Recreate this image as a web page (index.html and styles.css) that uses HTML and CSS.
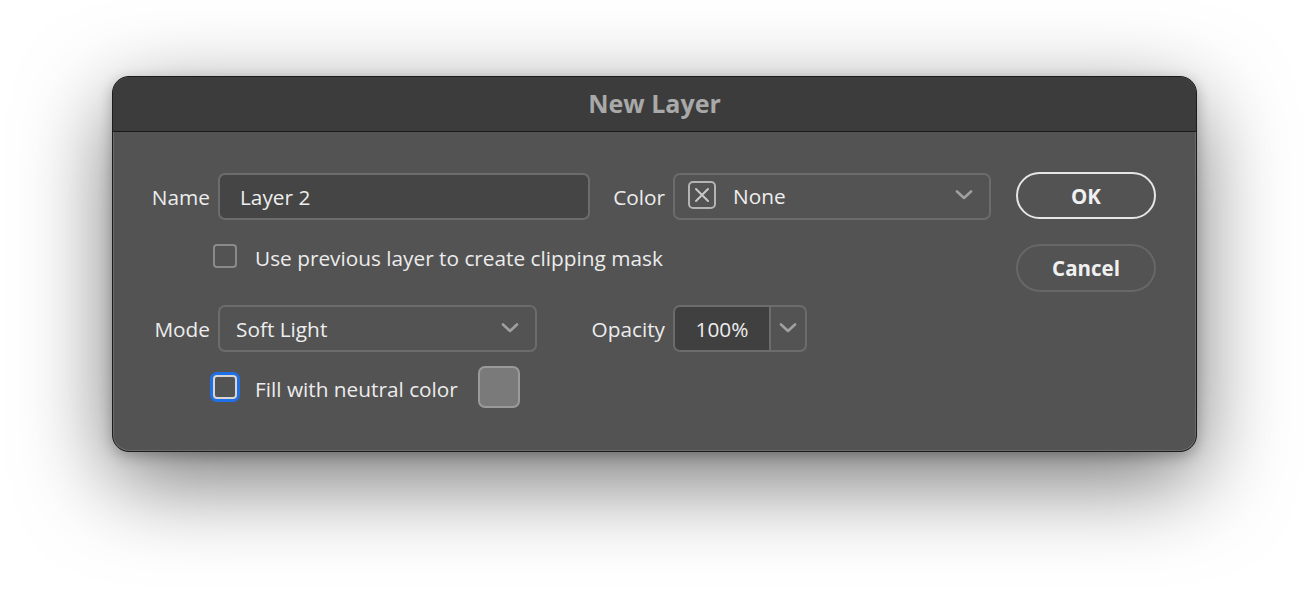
FILE: index.html
```html
<!DOCTYPE html>
<html>
<head>
<meta charset="utf-8">
<link rel="stylesheet" href="styles.css">
</head>
<body>
<div class="dialog">
  <div class="titlebar">New Layer</div>
  <div class="content">
    <div class="form">
      <div class="row row-fields">
        <label class="lbl">Name</label>
        <div class="field name-field">Layer 2</div>
        <label class="lbl">Color</label>
        <div class="field select color-select">
          <svg class="xbox" width="28" height="28" viewBox="0 0 28 28"><rect x="1" y="1" width="26" height="26" rx="4" fill="none" stroke="#b4b4b4" stroke-width="2"/><path d="M8 8 L20 20 M20 8 L8 20" stroke="#c8c8c8" stroke-width="2" stroke-linecap="round"/></svg>
          <span class="sel-text">None</span>
          <svg class="chev" width="18" height="10" viewBox="0 0 18 10"><path d="M2 1.5 L9 8 L16 1.5" fill="none" stroke="#a0a0a0" stroke-width="2.6" stroke-linecap="round" stroke-linejoin="round"/></svg>
        </div>
      </div>
      <div class="row row-check first-check">
        <span class="checkbox"></span>
        <span class="check-text">Use previous layer to create clipping mask</span>
      </div>
      <div class="row row-fields mode-row">
        <label class="lbl">Mode</label>
        <div class="field select mode-select">
          <span class="sel-text">Soft Light</span>
          <svg class="chev" width="18" height="10" viewBox="0 0 18 10"><path d="M2 1.5 L9 8 L16 1.5" fill="none" stroke="#a0a0a0" stroke-width="2.6" stroke-linecap="round" stroke-linejoin="round"/></svg>
        </div>
        <label class="lbl">Opacity</label>
        <div class="opacity">
          <div class="op-value">100%</div>
          <div class="op-btn"><svg width="18" height="10" viewBox="0 0 18 10"><path d="M2 1.5 L9 8 L16 1.5" fill="none" stroke="#a0a0a0" stroke-width="2.6" stroke-linecap="round" stroke-linejoin="round"/></svg></div>
        </div>
      </div>
      <div class="row row-check fill-row">
        <span class="checkbox focused"></span>
        <span class="check-text">Fill with neutral color</span>
        <span class="swatch"></span>
      </div>
    </div>
    <div class="buttons">
      <button class="btn btn-ok">OK</button>
      <button class="btn btn-cancel">Cancel</button>
    </div>
  </div>
</div>
</body>
</html>
```
FILE: styles.css
```css
html, body {
  margin: 0;
  padding: 0;
  background: #ffffff;
}
body {
  width: 1308px;
  height: 600px;
  overflow: hidden;
  padding: 76px 0 0 112px;
  box-sizing: border-box;
  font-family: "Open Sans", "Lato", sans-serif;
}
.dialog {
  width: 1085px;
  height: 376px;
  box-sizing: border-box;
  background: #535353;
  border: 1px solid #1c1c1c;
  border-radius: 17px;
  box-shadow: inset 0 0 0 1px #6a6a6a, 0 28px 90px rgba(0,0,0,0.55), 0 4px 14px rgba(0,0,0,0.25);
  overflow: hidden;
  display: flex;
  flex-direction: column;
}
.titlebar {
  height: 55px;
  flex: none;
  background: #3c3c3c;
  border-bottom: 1px solid #1a1a1a;
  color: #a9a9a9;
  font-weight: 700;
  font-size: 25px;
  display: flex;
  align-items: center;
  justify-content: center;
  padding-bottom: 3px;
  box-sizing: border-box;
}
.content {
  display: flex;
  padding: 40px 0 0 39px;
}
.form {
  display: flex;
  flex-direction: column;
}
.row-fields {
  display: grid;
  grid-template-columns: 58px 372px 67px 318px;
  column-gap: 8px;
  height: 48px;
  align-items: center;
}
.lbl {
  justify-self: end;
  color: #ececec;
  font-size: 20.8px;
  white-space: nowrap;
  padding-top: 2px;
}
.field {
  height: 47px;
  box-sizing: border-box;
  border: 2px solid #6c6c6c;
  border-radius: 7px;
  color: #eeeeee;
  font-size: 20.8px;
  display: flex;
  align-items: center;
  padding-top: 2px;
}
.name-field {
  background: #454545;
  padding-left: 20px;
}
.select {
  background: #535353;
}
.color-select {
  padding: 0 16px 0 13px;
}
.xbox {
  flex: none;
  margin-right: 17px;
  margin-bottom: 2px;
}
.sel-text {
  flex: 1;
}
.chev {
  flex: none;
  margin-bottom: 2px;
}
.mode-select {
  width: 319px;
  padding: 2px 16px 0 16px;
}
.mode-row {
  margin-top: 36px;
}
.opacity {
  width: 134px;
  height: 47px;
  box-sizing: border-box;
  border: 2px solid #6c6c6c;
  border-radius: 7px;
  display: flex;
  overflow: hidden;
}
.op-value {
  width: 96px;
  background: #404040;
  border-right: 2px solid #6c6c6c;
  color: #eeeeee;
  font-size: 20.8px;
  display: flex;
  align-items: center;
  justify-content: center;
  padding-top: 2px;
  box-sizing: border-box;
}
.op-btn {
  flex: 1;
  display: flex;
  align-items: center;
  justify-content: center;
}
.row-check {
  display: flex;
  align-items: center;
  padding-left: 61px;
}
.first-check {
  margin-top: 24px;
  height: 24px;
}
.fill-row {
  margin-top: 14px;
  height: 42px;
}
.checkbox {
  width: 24px;
  height: 24px;
  box-sizing: border-box;
  border: 2px solid #8a8a8a;
  border-radius: 4px;
  flex: none;
  margin-right: 18px;
}
.checkbox.focused {
  border-color: #d6d6d6;
  box-shadow: 0 0 0 3px #1f6fe6;
}
.check-text {
  color: #ececec;
  font-size: 20.8px;
  white-space: nowrap;
  padding-top: 3px;
}
.swatch {
  width: 42px;
  height: 42px;
  box-sizing: border-box;
  background: #7a7a7a;
  border: 2px solid #9a9a9a;
  border-radius: 7px;
  margin-left: 20px;
}
.buttons {
  display: flex;
  flex-direction: column;
  margin-left: 25px;
}
.btn {
  width: 140px;
  height: 47px;
  box-sizing: border-box;
  border-radius: 24px;
  background: transparent;
  font-family: inherit;
  font-weight: 700;
  font-size: 20.5px;
  color: #f0f0f0;
  padding: 0;
}
.btn-ok {
  border: 2px solid #e6e6e6;
}
.btn-cancel {
  margin-top: 25px;
  height: 48px;
  border: 2px solid #676767;
}
```
